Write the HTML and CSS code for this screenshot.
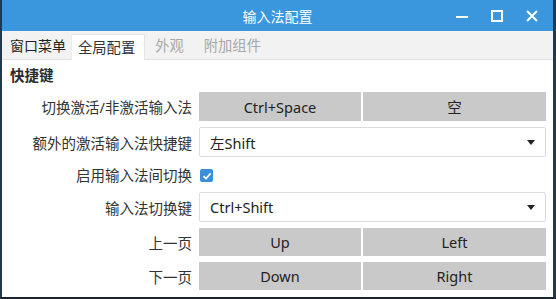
FILE: index.html
```html
<!DOCTYPE html>
<html>
<head>
<meta charset="utf-8">
<link rel="stylesheet" href="styles.css">
</head>
<body>
<div class="window">
  <div class="titlebar">
    <div class="title">输入法配置</div>
    <div class="controls">
      <svg class="ctl" width="14" height="14" viewBox="0 0 14 14"><rect x="1" y="7" width="12" height="2" fill="#fff"/></svg>
      <svg class="ctl" width="14" height="14" viewBox="0 0 14 14"><rect x="2" y="2" width="10" height="10" fill="none" stroke="#fff" stroke-width="2"/></svg>
      <svg class="ctl" width="14" height="14" viewBox="0 0 14 14"><path d="M2 2 L12 12 M12 2 L2 12" stroke="#fff" stroke-width="2"/></svg>
    </div>
  </div>
  <div class="tabbar">
    <div class="menu">窗口菜单</div>
    <div class="tab active">全局配置</div>
    <div class="tab">外观</div>
    <div class="tab">附加组件</div>
  </div>
  <div class="content">
    <div class="section">快捷键</div>
    <div class="form">
      <div class="label">切换激活/非激活输入法</div>
      <div class="pair first"><div class="btn">Ctrl+Space</div><div class="btn">空</div></div>
      <div class="label">额外的激活输入法快捷键</div>
      <div class="combo"><span>左Shift</span><span class="arrow"></span></div>
      <div class="label">启用输入法间切换</div>
      <div class="checkrow"><span class="check"><svg width="12" height="12" viewBox="0 0 12 12"><path d="M2.5 6.2 L5 8.6 L9.6 3.4" fill="none" stroke="#fff" stroke-width="1.6"/></svg></span></div>
      <div class="label">输入法切换键</div>
      <div class="combo"><span>Ctrl+Shift</span><span class="arrow"></span></div>
      <div class="label">上一页</div>
      <div class="pair"><div class="btn">Up</div><div class="btn">Left</div></div>
      <div class="label">下一页</div>
      <div class="pair"><div class="btn">Down</div><div class="btn">Right</div></div>
    </div>
  </div>
</div>
</body>
</html>
```
FILE: styles.css
```css
html, body {
  margin: 0;
  padding: 0;
  width: 556px;
  height: 299px;
  overflow: hidden;
  font-family: "Noto Sans", "Noto Sans CJK SC", sans-serif;
  font-size: 14px;
  color: #2b2b2b;
}
.window {
  box-sizing: border-box;
  width: 556px;
  height: 299px;
  border-left: 2px solid #24384c;
  border-right: 3px solid #24384c;
  border-bottom: 2px solid #1a2430;
  display: flex;
  flex-direction: column;
  background: #fff;
}
.titlebar {
  height: 31px;
  background: #3b97dd;
  display: flex;
  align-items: center;
  justify-content: center;
  position: relative;
  color: #fff;
}
.title {
  font-size: 14px;
}
.controls {
  position: absolute;
  right: 14px;
  top: 9px;
  display: flex;
  gap: 21px;
}
.ctl { display: block; }
.tabbar {
  height: 28px;
  background: #f2f2f2;
  display: flex;
  align-items: flex-end;
  border-bottom: 1px solid #e2e2e2;
}
.menu {
  padding: 0 5px 3px 8px;
  color: #222;
  font-size: 14px;
  line-height: 20px;
}
.tab {
  padding: 0 10px 3px;
  color: #a8a8a8;
  font-size: 14.3px;
  line-height: 20px;
}
.tab.active {
  background: #fff;
  color: #333;
  padding: 3px 9px 2px 6px;
  border-top: 1px solid #e4e4e4;
  border-right: 1px solid #e4e4e4;
  border-left: 1px solid #ececec;
  margin-bottom: -1px;
}
.content {
  padding: 4px 8px 0 8px;
  flex: 1;
}
.section {
  font-weight: bold;
  font-size: 14.5px;
  height: 28px;
  line-height: 22px;
}
.form {
  display: grid;
  grid-template-columns: 182px 347px;
  column-gap: 7px;
  row-gap: 6px;
  align-items: center;
}
.label {
  text-align: right;
  color: #333;
  font-size: 14.5px;
}
.pair {
  display: flex;
  gap: 2px;
  height: 28px;
}
.pair.first { height: 29px; }
.btn {
  flex: 1;
  background: #c9c9c9;
  display: flex;
  align-items: center;
  justify-content: center;
  color: #222;
  font-size: 14.5px;
}
.pair .btn:first-child { flex: 0 0 162px; }
.combo {
  height: 30px;
  box-sizing: border-box;
  border: 1px solid #dcdcdc;
  border-radius: 2px;
  display: flex;
  align-items: center;
  justify-content: space-between;
  padding: 0 10px;
  color: #222;
  font-size: 14.5px;
}
.arrow {
  width: 0; height: 0;
  border-left: 4px solid transparent;
  border-right: 4px solid transparent;
  border-top: 5px solid #222;
}
.checkrow { height: 23px; display: flex; align-items: center; }
.check {
  width: 13px; height: 13px;
  margin-left: 1px;
  margin-top: 2px;
  background: #3b8fd9;
  border-radius: 2px;
  display: flex;
  align-items: center;
  justify-content: center;
}
.check svg { display: block; }
```
